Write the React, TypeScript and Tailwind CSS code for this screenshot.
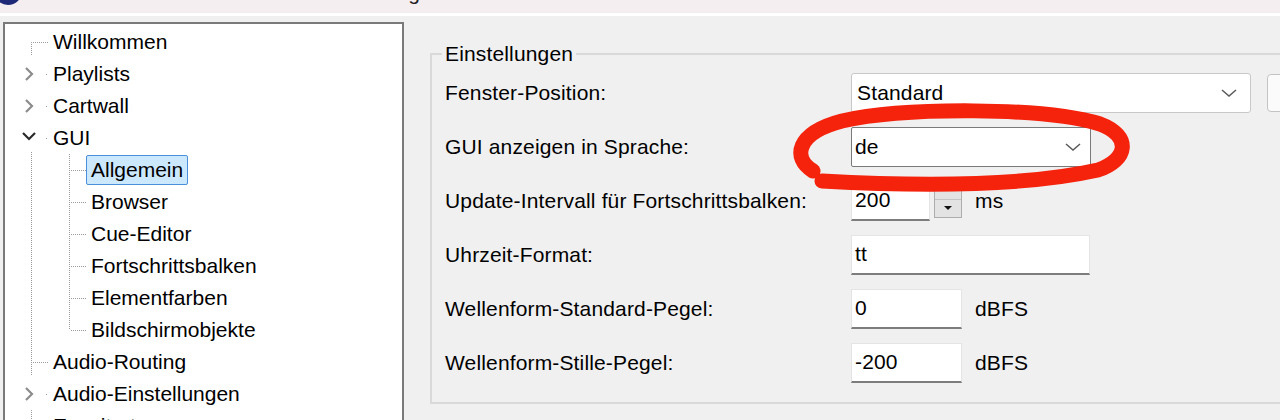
import React from 'react';

type Row = {
  label: string;
  level: 1 | 2;
  chevron?: 'right' | 'down';
  // vertical line segments on the level-1 rail (local y, 0-32)
  rail?: [number, number];
  // level-2 rail: full or up to centre
  sub?: 'full' | 'half';
  selected?: boolean;
};

const rows: Row[] = [
  { label: 'Willkommen', level: 1, rail: [16, 30] },
  { label: 'Playlists', level: 1, chevron: 'right' },
  { label: 'Cartwall', level: 1, chevron: 'right' },
  { label: 'GUI', level: 1, chevron: 'down', rail: [30, 32] },
  { label: 'Allgemein', level: 2, sub: 'full', selected: true },
  { label: 'Browser', level: 2, sub: 'full' },
  { label: 'Cue-Editor', level: 2, sub: 'full' },
  { label: 'Fortschrittsbalken', level: 2, sub: 'full' },
  { label: 'Elementfarben', level: 2, sub: 'full' },
  { label: 'Bildschirmobjekte', level: 2, sub: 'half' },
  { label: 'Audio-Routing', level: 1, rail: [0, 29] },
  { label: 'Audio-Einstellungen', level: 1, chevron: 'right' },
  { label: 'Erweitert', level: 1, rail: [0, 32] },
];

const dot = { stroke: '#9a9a9a', strokeWidth: 1, strokeDasharray: '1 1' };

const Gutter: React.FC<{ row: Row }> = ({ row }) => {
  if (row.level === 2) {
    return (
      <svg width="81" height="32" className="shrink-0">
        <line x1="26.5" y1="0" x2="26.5" y2="32" {...dot} />
        <line x1="64.5" y1="0" x2="64.5" y2={row.sub === 'full' ? 32 : 16} {...dot} />
        <line x1="66" y1="16.5" x2="81" y2="16.5" {...dot} />
      </svg>
    );
  }
  return (
    <svg width="43" height="32" className="shrink-0">
      {row.rail && <line x1="26.5" y1={row.rail[0]} x2="26.5" y2={row.rail[1]} {...dot} />}
      {row.chevron ? (
        <line x1="41" y1="16.5" x2="43" y2="16.5" {...dot} />
      ) : (
        <line x1="28" y1="16.5" x2="43" y2="16.5" {...dot} />
      )}
      {row.chevron === 'right' && (
        <polyline points="21,10 27,16 21,22" fill="none" stroke="#8c8c8c" strokeWidth="2.2" />
      )}
      {row.chevron === 'down' && (
        <polyline points="18,11 24,17 30,11" fill="none" stroke="#2b2b2b" strokeWidth="2.2" />
      )}
    </svg>
  );
};

const Chevron: React.FC = () => (
  <svg width="16" height="10" viewBox="0 0 16 10" className="shrink-0">
    <polyline points="1,2 8,8 15,2" fill="none" stroke="#5a5a5a" strokeWidth="1.5" />
  </svg>
);

const TextBox: React.FC<{ value: string; width: string }> = ({ value, width }) => (
  <div
    className={`${width} h-[40px] bg-white border border-[#e4e4e4] border-b-2 border-b-[#7d7d7d] flex items-center pl-[3px]`}
  >
    {value}
  </div>
);

const Label: React.FC<{ children: React.ReactNode }> = ({ children }) => (
  <div className="w-[406px] shrink-0">{children}</div>
);

export default function App() {
  return (
    <div className="relative w-[1280px] h-[420px] overflow-hidden bg-[#f0f0f0] text-black text-[21px] font-['Liberation_Sans',Arial,sans-serif]">
      {/* title strip */}
      <div className="h-[13px] bg-[#f5eef0] flex overflow-hidden">
        <svg width="24" height="13" className="shrink-0">
          <circle cx="8" cy="-9" r="14" fill="#1e2a78" />
        </svg>
        <div className="w-[396px] flex justify-end leading-none -mt-[18px] text-[#222]">Einstellung</div>
      </div>
      <div className="h-[3px] bg-white" />

      <div className="flex pt-[6px]">
        {/* tree */}
        <div className="ml-[3px] w-[401px] h-[420px] shrink-0 border-2 border-[#7a7a7a] bg-white pt-[2px]">
          {rows.map((row) => (
            <div key={row.label} className="h-[32px] flex items-center">
              <Gutter row={row} />
              <span
                className={`h-[30px] flex items-center px-[4px] border rounded-[2px] whitespace-nowrap ${
                  row.selected ? 'border-[#4a8fdc] bg-[#cce8ff]' : 'border-transparent'
                }`}
              >
                {row.label}
              </span>
            </div>
          ))}
        </div>

        {/* settings */}
        <fieldset className="ml-[26px] mt-[16px] w-[900px] h-[366px] shrink-0 border-2 border-[#d9d9d9] pl-[13px] pt-[3px] tracking-[0.15px]">
          <legend className="-ml-[3px] px-[3px]">Einstellungen</legend>
          <div className="flex flex-col gap-[14px]">
            <div className="flex items-center h-[40px]">
              <Label>Fenster-Position:</Label>
              <div className="w-[400px] h-[40px] bg-white border border-[#c8c8c8] rounded-[3px] flex items-center justify-between pl-[5px] pr-[13px]">
                <span>Standard</span>
                <Chevron />
              </div>
              <div className="ml-[16px] w-[60px] h-[38px] bg-[#fbfbfb] border border-[#c3c3c3] rounded-[4px]" />
            </div>

            <div className="flex items-center h-[40px]">
              <Label>GUI anzeigen in Sprache:</Label>
              <div className="w-[240px] h-[40px] bg-white border border-[#7a7a7a] rounded-[2px] flex items-center justify-between pl-[3px] pr-[9px]">
                <span>de</span>
                <Chevron />
              </div>
            </div>

            <div className="flex items-center h-[40px]">
              <Label>Update-Intervall für Fortschrittsbalken:</Label>
              <TextBox value="200" width="w-[79px]" />
              <div className="ml-[4px] self-start w-[28px] h-[37px] border border-[#adadad] bg-[#e3e3e3] flex flex-col">
                <div className="h-[18px] border-b border-[#c4c4c4]" />
                <div className="flex-1 flex items-center justify-center">
                  <svg width="10" height="6" viewBox="0 0 10 6">
                    <polygon points="1,1 9,1 5,5" fill="#111" />
                  </svg>
                </div>
              </div>
              <span className="ml-[13px]">ms</span>
            </div>

            <div className="flex items-center h-[40px]">
              <Label>Uhrzeit-Format:</Label>
              <TextBox value="tt" width="w-[239px]" />
            </div>

            <div className="flex items-center h-[40px]">
              <Label>Wellenform-Standard-Pegel:</Label>
              <TextBox value="0" width="w-[111px]" />
              <span className="ml-[13px]">dBFS</span>
            </div>

            <div className="flex items-center h-[40px]">
              <Label>Wellenform-Stille-Pegel:</Label>
              <TextBox value="-200" width="w-[111px]" />
              <span className="ml-[13px]">dBFS</span>
            </div>
          </div>
        </fieldset>
      </div>

      {/* hand-drawn red marker ring */}
      <svg className="absolute inset-0 pointer-events-none" width="1280" height="420">
        <path
          d="M 813 171 C 792 158, 796 133, 842 121 C 905 107, 1045 107, 1100 124 C 1132 136, 1128 160, 1098 170 C 1040 183, 950 188, 822 181"
          fill="none"
          stroke="#f5220c"
          strokeWidth="15"
          strokeLinecap="round"
        />
      </svg>
    </div>
  );
}
